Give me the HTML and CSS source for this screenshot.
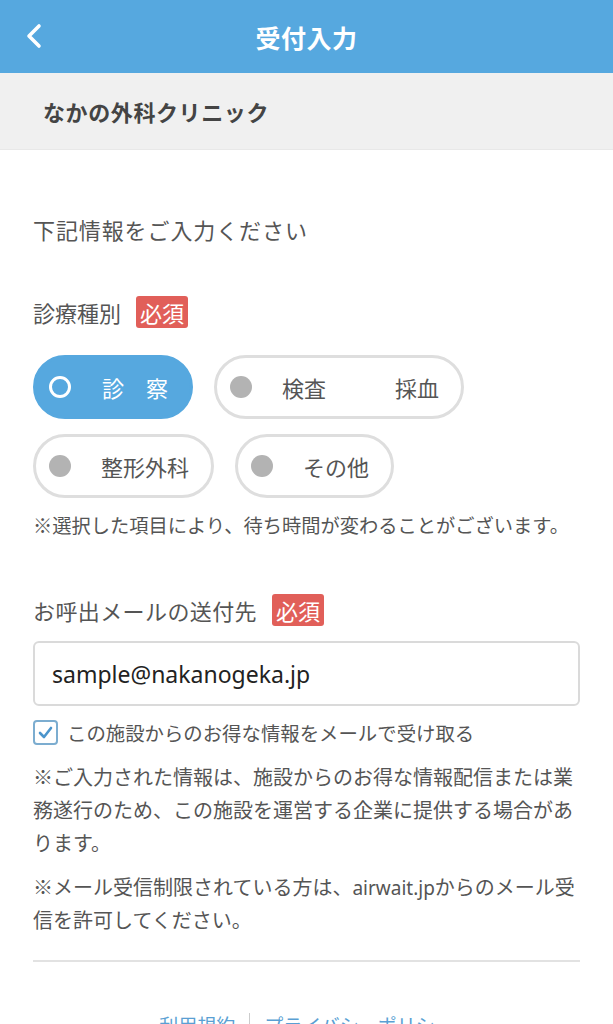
FILE: index.html
```html
<!DOCTYPE html>
<html lang="ja">
<head>
<meta charset="utf-8">
<title>受付入力</title>
<link rel="stylesheet" href="styles.css">
</head>
<body>
<header class="topbar">
  <span class="back">
    <svg width="20" height="28" viewBox="0 0 20 28"><polyline points="15,4 5,14 15,24" fill="none" stroke="#fff" stroke-width="3.6" stroke-linecap="round" stroke-linejoin="round"/></svg>
  </span>
  <h1 class="title">受付入力</h1>
</header>
<div class="clinic">なかの外科クリニック</div>
<main class="content">
  <p class="intro">下記情報をご入力ください</p>

  <div class="label"><span>診療種別</span><span class="badge">必須</span></div>
  <div class="pills">
    <div class="pill selected"><span class="dot"></span><span class="ptext">診　察</span></div>
    <div class="pill"><span class="dot"></span><span class="ptext">検査<span class="sep">採血</span></span></div>
    <div class="pill"><span class="dot"></span><span class="ptext">整形外科</span></div>
    <div class="pill"><span class="dot"></span><span class="ptext">その他</span></div>
  </div>
  <p class="note">※選択した項目により、待ち時間が変わることがございます。</p>

  <div class="label label2"><span>お呼出メールの送付先</span><span class="badge">必須</span></div>
  <input class="email" type="email" value="sample@nakanogeka.jp">
  <label class="check">
    <span class="box"><svg width="17" height="17" viewBox="0 0 17 17"><polyline points="3,9 7,13 14,4" fill="none" stroke="#4b95cc" stroke-width="2.6" stroke-linecap="round" stroke-linejoin="round"/></svg></span>
    <span>この施設からのお得な情報をメールで受け取る</span>
  </label>
  <p class="para p1">※ご入力された情報は、施設からのお得な情報配信または業務遂行のため、この施設を運営する企業に提供する場合があります。</p>
  <p class="para p2">※メール受信制限されている方は、<span class="latin">airwait.jp</span>からのメール受信を許可してください。</p>
  <hr class="rule">
  <nav class="footer"><a>利用規約</a><span class="bar"></span><a>プライバシーポリシー</a></nav>
</main>
</body>
</html>
```

FILE: styles.css
```css
html, body {
  margin: 0;
  padding: 0;
  background: #fff;
  font-family: "Noto Sans CJK JP", "Noto Sans", sans-serif;
  color: #555;
}
.topbar {
  height: 73px;
  background: #56a8df;
  display: flex;
  align-items: center;
  justify-content: center;
  position: relative;
}
.back {
  position: absolute;
  left: 24px;
  top: 22px;
  display: block;
  line-height: 0;
}
.title {
  margin: 0;
  color: #fff;
  font-size: 25px;
  font-weight: 700;
  letter-spacing: 0.5px;
}
.clinic {
  height: 76px;
  background: #f0f0f0;
  border-bottom: 1px solid #e8e8e8;
  display: flex;
  align-items: center;
  padding-left: 43px;
  font-size: 22px;
  font-weight: 700;
  color: #444;
  letter-spacing: 0.6px;
}
.content {
  padding: 0 33px;
  display: flex;
  flex-direction: column;
}
.intro {
  margin: 63px 0 0;
  font-size: 22px;
  line-height: 32px;
  letter-spacing: 0.9px;
}
.label {
  margin-top: 51px;
  display: flex;
  align-items: center;
  height: 32px;
  font-size: 22px;
}
.label2 { margin-top: 54px; letter-spacing: 0.4px; }
.badge {
  margin-left: 15px;
  background: #e15f59;
  color: #fff;
  height: 32px;
  line-height: 32px;
  padding: 0 4px;
  border-radius: 3px;
  letter-spacing: 0;
}
.pills {
  margin-top: 27px;
  display: flex;
  flex-wrap: wrap;
  gap: 15px 21px;
}
.pill {
  box-sizing: border-box;
  height: 64px;
  border: 3px solid #dedede;
  border-radius: 32px;
  display: flex;
  align-items: center;
  padding: 0 22px 0 13px;
  font-size: 22px;
  color: #555;
  background: #fff;
}
.dot {
  width: 22px;
  height: 22px;
  border-radius: 50%;
  background: #b3b3b3;
  margin-right: 30px;
  box-sizing: border-box;
}
.pill.selected {
  background: #56a8df;
  border-color: #56a8df;
  color: #fff;
}
.pill.selected .dot {
  background: transparent;
  border: 3px solid #fff;
  margin-right: 31px;
}
.sep { margin-left: 69px; }
.note {
  margin: 12px 0 0;
  font-size: 19.25px;
  line-height: 30px;
  white-space: nowrap;
}
.email {
  margin-top: 15px;
  box-sizing: border-box;
  width: 100%;
  height: 65px;
  border: 2px solid #dadada;
  border-radius: 6px;
  padding: 0 17px;
  font-family: "Noto Sans", "Open Sans", sans-serif;
  font-size: 23px;
  color: #222;
  background: #fff;
  outline: none;
}
.check {
  margin-top: 13px;
  display: flex;
  align-items: center;
  height: 26px;
  font-size: 19.4px;
  color: #555;
}
.box {
  box-sizing: border-box;
  width: 25px;
  height: 25px;
  border: 2px solid #7cadd0;
  border-radius: 4px;
  display: flex;
  align-items: center;
  justify-content: center;
  margin-right: 9px;
}
.para {
  margin: 0;
  font-size: 20px;
  line-height: 33px;
}
.latin {
  font-family: "Noto Sans", "Open Sans", sans-serif;
  font-size: 19px;
  line-height: 1;
}
.p1 { margin-top: 15px; }
.p2 { margin-top: 11px; }
.rule {
  margin: 24px 0 0;
  border: 0;
  border-top: 2px solid #e2e2e2;
  width: 100%;
}
.footer {
  margin-top: 48px;
  display: flex;
  justify-content: center;
  align-items: center;
  font-size: 19px;
  line-height: 30px;
  color: #5a9fd3;
}
.bar {
  width: 1px;
  height: 24px;
  background: #ccc;
  margin: 0 14px;
}
```
